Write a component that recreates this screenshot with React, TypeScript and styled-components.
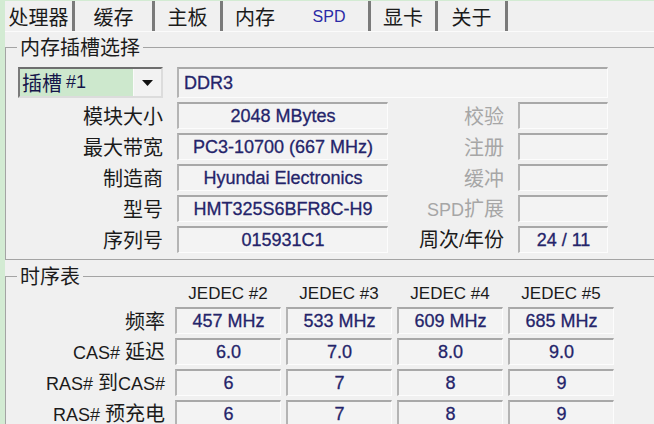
import React from 'react';
import styled, { createGlobalStyle } from 'styled-components';

const cjk = `"Noto Sans CJK SC", "Liberation Sans", sans-serif`;
const latin = `"Liberation Sans", Arial, "Noto Sans CJK SC", sans-serif`;

const GlobalStyle = createGlobalStyle`
  html, body {
    margin: 0;
    padding: 0;
    background: #f0f0f0;
    overflow: hidden;
  }
  body {
    width: 654px;
    height: 424px;
  }
`;

const Window = styled.div`
  display: flex;
  width: 654px;
  height: 424px;
  background: #d3ebd3;
  overflow: hidden;
`;

const Edge = styled.div`
  flex: none;
  width: 5px;
`;

const Main = styled.div`
  flex: 1;
  min-width: 0;
  margin-top: 1px;
  background: #f0f0f0;
  display: flex;
  flex-direction: column;
  overflow: hidden;
`;

const TabBar = styled.div`
  display: flex;
  flex: none;
  height: 30px;
  border-bottom: 1px solid #fbfbfb;
`;

const Tab = styled.div<{ $w: number; $active?: boolean; $covered?: boolean }>`
  flex: none;
  box-sizing: border-box;
  width: ${p => p.$w}px;
  height: 100%;
  padding-top: 1px;
  display: flex;
  align-items: center;
  justify-content: center;
  border-right: 3px solid ${p => (p.$covered ? 'transparent' : '#7a7a7a')};
  font-family: ${p => (p.$active ? latin : cjk)};
  font-size: ${p => (p.$active ? 16 : 20)}px;
  color: ${p => (p.$active ? '#2a2aa6' : '#1b1b1b')};
  line-height: 1;
`;

const Group = styled.fieldset<{ $gap: number }>`
  margin: ${p => p.$gap}px -30px 0 0;
  padding: 0 0 6px 12px;
  border: none;
  border-top: 1px solid #a4a4a4;
  border-left: 1px solid #a4a4a4;
  border-bottom: 1px solid #a4a4a4;
  min-width: 0;
`;

const Legend = styled.legend`
  padding: 0 3px;
  margin-left: -1px;
  font-family: ${cjk};
  font-size: 20px;
  line-height: 24px;
  color: #1b1b1b;
`;

const SlotGrid = styled.div`
  display: grid;
  grid-template-columns: 145px 211px 102px 90px;
  grid-template-rows: 31px repeat(5, 27px);
  column-gap: 14px;
  row-gap: 4px;
  margin-top: 8px;
`;

const TimingGrid = styled.div`
  display: grid;
  grid-template-columns: 152px repeat(4, 106px);
  grid-template-rows: 18px repeat(4, 27px);
  column-gap: 5px;
  row-gap: 4px;
  margin-top: -3px;
`;

const Label = styled.div<{ $dim?: boolean; $pad?: number }>`
  display: flex;
  align-items: center;
  justify-content: flex-end;
  padding-right: ${p => p.$pad ?? 0}px;
  font-family: ${cjk};
  font-size: 20px;
  line-height: 1;
  white-space: pre;
  color: ${p => (p.$dim ? '#a6a6a6' : '#1b1b1b')};
`;

const Lat = styled.span`
  font-family: ${latin};
  font-size: 18px;
`;

const Field = styled.div<{ $left?: boolean; $span?: string }>`
  box-sizing: border-box;
  grid-column: ${p => p.$span ?? 'auto'};
  display: flex;
  align-items: center;
  justify-content: ${p => (p.$left ? 'flex-start' : 'center')};
  padding-left: ${p => (p.$left ? 5 : 0)}px;
  border-top: 2px solid #a8a8a8;
  border-left: 2px solid #b4b4b4;
  border-bottom: 1px solid #fcfcfc;
  border-right: 1px solid #fcfcfc;
  background: #f3f3f3;
  font-family: ${latin};
  font-size: 18px;
  color: #24246a;
  -webkit-text-stroke: 0.3px #24246a;
  white-space: nowrap;
`;

const ColHead = styled.div`
  display: flex;
  align-items: center;
  justify-content: center;
  font-family: ${latin};
  font-size: 17px;
  color: #1b1b1b;
`;

const Combo = styled.div`
  box-sizing: border-box;
  display: flex;
  border-top: 2px solid #6e6e6e;
  border-left: 2px solid #7a7a7a;
  border-bottom: 2px solid #dcdcdc;
  border-right: 2px solid #dcdcdc;
  background: #f0f0f0;
`;

const ComboText = styled.div`
  flex: 1;
  display: flex;
  align-items: center;
  gap: 4px;
  padding-left: 2px;
  background: #cde8cd;
  font-family: ${cjk};
  font-size: 20px;
  color: #15154a;
`;

const ComboButton = styled.div`
  flex: none;
  width: 27px;
  display: flex;
  align-items: center;
  justify-content: center;
  border-left: 1px solid #fafafa;
  background: #f2f2f2;
`;

const tabs = [
  { t: '处理器', w: 70 },
  { t: '缓存', w: 80 },
  { t: '主板', w: 68 },
  { t: '内存', w: 67, covered: true },
  { t: 'SPD', w: 81, active: true },
  { t: '显卡', w: 67 },
  { t: '关于', w: 70 },
];

const slotRows = [
  { label: '模块大小', value: '2048 MBytes', side: '校验', sideValue: '', dim: true },
  { label: '最大带宽', value: 'PC3-10700 (667 MHz)', side: '注册', sideValue: '', dim: true },
  { label: '制造商', value: 'Hyundai Electronics', side: '缓冲', sideValue: '', dim: true },
  { label: '型号', value: 'HMT325S6BFR8C-H9', side: <span><Lat>SPD</Lat>扩展</span>, sideValue: '', dim: true },
  { label: '序列号', value: '015931C1', side: <span>周次<Lat>/</Lat>年份</span>, sideValue: '24 / 11', dim: false },
];

const timingRows = [
  { label: <span>频率</span>, values: ['457 MHz', '533 MHz', '609 MHz', '685 MHz'] },
  { label: <span><Lat>CAS# </Lat>延迟</span>, values: ['6.0', '7.0', '8.0', '9.0'] },
  { label: <span><Lat>RAS# </Lat>到<Lat>CAS#</Lat></span>, values: ['6', '7', '8', '9'] },
  { label: <span><Lat>RAS# </Lat>预充电</span>, values: ['6', '7', '8', '9'] },
];

const App: React.FC = () => {
  return (
    <>
      <GlobalStyle />
      <Window>
        <Edge />
        <Main>
          <TabBar>
            {tabs.map(tab => (
              <Tab key={tab.t} $w={tab.w} $active={tab.active} $covered={tab.covered}>
                {tab.t}
              </Tab>
            ))}
          </TabBar>

          <Group $gap={3}>
            <Legend>内存插槽选择</Legend>
            <SlotGrid>
              <Combo>
                <ComboText>
                  插槽<Lat>#1</Lat>
                </ComboText>
                <ComboButton>
                  <svg width="11" height="6" viewBox="0 0 11 6">
                    <path d="M0 0h11L5.5 6z" fill="#111" />
                  </svg>
                </ComboButton>
              </Combo>
              <Field $left $span="2 / 5">DDR3</Field>

              {slotRows.map(row => (
                <React.Fragment key={row.label}>
                  <Label>{row.label}</Label>
                  <Field>{row.value}</Field>
                  <Label $dim={row.dim}>{row.side}</Label>
                  <Field>{row.sideValue}</Field>
                </React.Fragment>
              ))}
            </SlotGrid>
          </Group>

          <Group $gap={4}>
            <Legend>时序表</Legend>
            <TimingGrid>
              <div />
              {['JEDEC #2', 'JEDEC #3', 'JEDEC #4', 'JEDEC #5'].map(h => (
                <ColHead key={h}>{h}</ColHead>
              ))}
              {timingRows.map((row, i) => (
                <React.Fragment key={i}>
                  <Label $pad={5}>{row.label}</Label>
                  {row.values.map((v, j) => (
                    <Field key={j}>{v}</Field>
                  ))}
                </React.Fragment>
              ))}
            </TimingGrid>
          </Group>
        </Main>
      </Window>
    </>
  );
};

export default App;
